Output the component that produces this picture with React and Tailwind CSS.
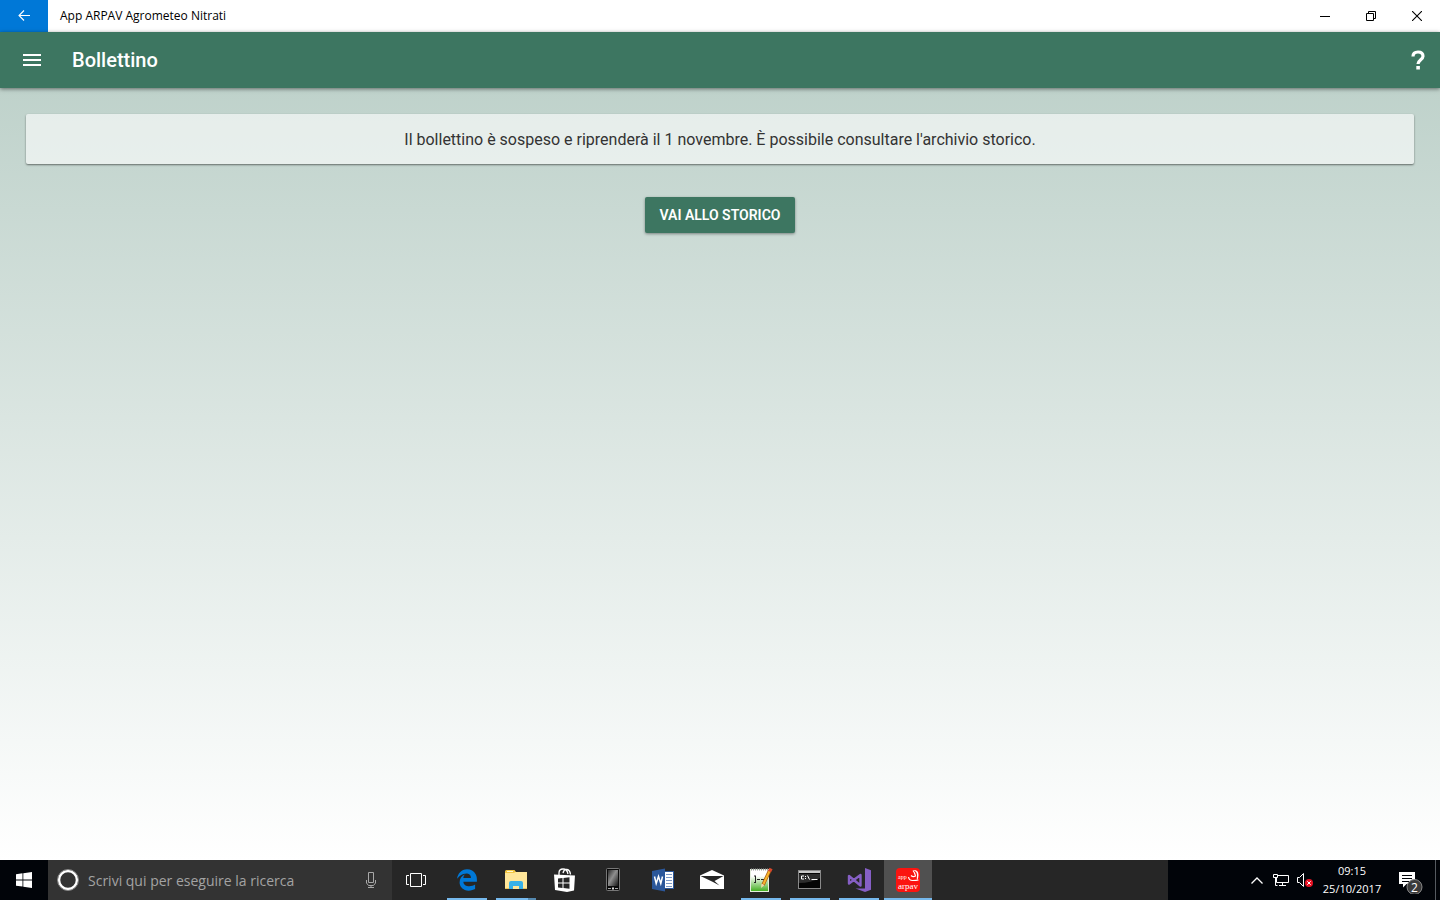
import { FaEdgeLegacy } from 'react-icons/fa6'

const ExplorerIcon = () => (
  <svg width="48" height="40" viewBox="0 0 48 40" aria-hidden="true">
    <path d="M13 11.5q0-1.500 1.500-1.500h8l1.500 2h10.500v17h-21.500z" fill="#f2c744" />
    <path d="M13 13h9l1.500-1h11.500v17h-22z" fill="#ffe699" />
    <path d="M15 11h6v1h-6z" fill="#fff7d6" />
    <path d="M17 29v-6q0-2 2-2h10q2 0 2 2v6h-4v-3h-6v3z" fill="#38b1e8" />
    <path d="M13 28h4v1h-4zM31 28h4v1h-4z" fill="#e9c35c" />
  </svg>
)

const StoreIcon = () => (
  <svg width="48" height="40" viewBox="0 0 48 40" aria-hidden="true">
    <path d="M18 15v-2q0-4 4-4t5 5M22 13q1-4 4-3.500t3.500 5" fill="none" stroke="#fff" strokeWidth="1.3" />
    <path d="M13 14.500l21 1-1 15-7 1.500-12-2z" fill="#fff" />
    <path d="M17 18.500l4.500-.5v4.500H17zM22.500 18l6-.7v5.200h-6zM17 23.500h4.500V28l-4.500-.5zM22.500 23.500h6v5.200l-6-.7z" fill="#262626" />
  </svg>
)

const PhoneIcon = () => (
  <svg width="48" height="40" viewBox="0 0 48 40" aria-hidden="true">
    <defs>
      <linearGradient id="phone" x1="0" y1="0" x2="1" y2="1">
        <stop offset="0" stopColor="#2a2a2a" />
        <stop offset=".45" stopColor="#8f8f8f" />
        <stop offset="1" stopColor="#161616" />
      </linearGradient>
    </defs>
    <rect x="16.5" y="8.5" width="13" height="22" rx="1" fill="#0a0a0a" stroke="#777" />
    <rect x="18" y="10" width="10" height="16" fill="url(#phone)" />
    <path d="M18 28.500h3M25 28.500h3" stroke="#aaa" />
    <rect x="22" y="27.5" width="2" height="2" fill="#ddd" />
  </svg>
)

const WordIcon = () => (
  <svg width="48" height="40" viewBox="0 0 48 40" aria-hidden="true">
    <rect x="25.5" y="11.5" width="9" height="17" fill="#fff" stroke="#2b579a" />
    <path d="M27 14.500h6M27 17.500h6M27 20.500h6M27 23.500h6M27 26.500h6" stroke="#7a98c6" />
    <path d="M13 11l13-2.500v23L13 29z" fill="#2b579a" />
    <path d="M15.500 16.500l1.700 7 2.300-7 2.300 7 1.700-7" fill="none" stroke="#fff" strokeWidth="1.5" />
  </svg>
)

const MailIcon = () => (
  <svg width="48" height="40" viewBox="0 0 48 40" aria-hidden="true">
    <path d="M12 15.500L24 10l12 5.500V29H12z" fill="#fff" />
    <path d="M12.500 16H35.500L26.500 21l5 4.500-6.500-3.500z" fill="#262626" />
  </svg>
)

const EditorIcon = () => (
  <svg width="48" height="40" viewBox="0 0 48 40" aria-hidden="true">
    <defs>
      <linearGradient id="editor" x1="0" y1="0" x2="0" y2="1">
        <stop offset=".3" stopColor="#fff" />
        <stop offset="1" stopColor="#3fae1c" />
      </linearGradient>
    </defs>
    <rect x="13.5" y="9.5" width="18" height="22" fill="url(#editor)" stroke="#e4eedd" />
    <path d="M14 9.500h17" stroke="#999" strokeDasharray="1 1" strokeWidth="2" />
    <path d="M17 16h2M17 22.500h2M18.500 16v7M20 19.500h3M24 19.500h3" stroke="#222" />
    <path d="M32.500 11l-6.500 14" stroke="#a85b12" strokeWidth="3.5" />
    <path d="M32.500 11l-6 13" stroke="#f8b62d" strokeWidth="2" />
    <path d="M34 8.500l-1.500 3" stroke="#d9482b" strokeWidth="3.5" />
    <path d="M24.500 23.500l3 1.500-3.500 3z" fill="#f5d9a8" />
  </svg>
)

const ConsoleIcon = () => (
  <svg width="48" height="40" viewBox="0 0 48 40" aria-hidden="true">
    <rect x="12.5" y="10.5" width="22" height="18" fill="#050505" stroke="#8a8a8a" />
    <path d="M13 11h21v2H13z" fill="#c8c8c8" />
    <path d="M13 14h21v4q-9 5-21 5z" fill="#2d2d2d" />
    <path d="M18 16h-2.500v3H18M19.500 16v1M19.500 18v1M21.500 15.500l2 4M25.500 19.500h6" fill="none" stroke="#fff" />
  </svg>
)

const VisualStudioIcon = () => (
  <svg width="48" height="40" viewBox="0 0 48 40" aria-hidden="true">
    <path d="M30 8l6 2.200v19.600L30 32l-9.500-3.500L30 28.500z" fill="#865fc5" />
    <path d="M14 16v7.500l11.500-8.500v10.500z" fill="none" stroke="#865fc5" strokeWidth="2.4" strokeLinejoin="round" />
  </svg>
)

const ArpavIcon = () => (
  <svg width="48" height="40" viewBox="0 0 48 40" aria-hidden="true">
    <rect x="12" y="8" width="24" height="24" rx="4" fill="#fb1410" />
    <path d="M29 10q5.500-.5 5.500 5 0 3-1.500 5.500-.5-2 0-4.500.5-4.500-4-6z" fill="#fff" />
    <path d="M29 10.500q2 2.500 2.500 5.500-2.500 1.500-4.500-.5M24.500 17q.5 3.500 4 3.500 4 0 6-.5" fill="none" stroke="#fff" strokeWidth="1.2" />
    <text x="14" y="19" fill="#fff" fontSize="6" fontFamily="Liberation Serif, serif">app</text>
    <text x="14" y="29" fill="#fff" fontSize="9" fontFamily="Liberation Serif, serif">arpav</text>
  </svg>
)

const taskApps = [
  { name: 'Microsoft Edge', icon: <FaEdgeLegacy size={22} color="#0078d7" aria-hidden="true" />, running: true },
  { name: 'Esplora file', icon: <ExplorerIcon />, running: true, multiple: true },
  { name: 'Store', icon: <StoreIcon /> },
  { name: 'Telefono', icon: <PhoneIcon /> },
  { name: 'Word', icon: <WordIcon /> },
  { name: 'Posta', icon: <MailIcon /> },
  { name: 'Editor', icon: <EditorIcon />, running: true },
  { name: 'Prompt dei comandi', icon: <ConsoleIcon />, running: true },
  { name: 'Visual Studio', icon: <VisualStudioIcon />, running: true },
  { name: 'App ARPAV', icon: <ArpavIcon />, running: true, active: true },
]

function TitleBar() {
  return (
    <div className="flex h-8 bg-white text-black">
      <button aria-label="Indietro" className="flex w-12 items-center justify-center bg-[#0078d7]">
        <svg width="12" height="12" viewBox="0 0 12 12" fill="none" stroke="#fff" aria-hidden="true">
          <path d="M12 5.500H.7M6 .5l-5 5 5 5" strokeWidth="1.1" />
        </svg>
      </button>
      <p className="flex-1 pl-3 font-['Open_Sans','Noto_Sans',sans-serif] text-xs leading-8">App ARPAV Agrometeo Nitrati</p>
      <button aria-label="Riduci a icona" className="flex w-[46px] items-center justify-center">
        <svg width="10" height="10" viewBox="0 0 10 10" stroke="#000" aria-hidden="true">
          <path d="M0 5.500h10" />
        </svg>
      </button>
      <button aria-label="Ripristina" className="flex w-[46px] items-center justify-center">
        <svg width="10" height="10" viewBox="0 0 10 10" fill="none" stroke="#000" aria-hidden="true">
          <path d="M.5 2.500h7v7h-7zM2.500 2.500v-2h7v7h-2" />
        </svg>
      </button>
      <button aria-label="Chiudi" className="flex w-[46px] items-center justify-center">
        <svg width="10" height="10" viewBox="0 0 10 10" stroke="#000" aria-hidden="true">
          <path d="M0 0l10 10M10 0L0 10" strokeWidth="1.1" />
        </svg>
      </button>
    </div>
  )
}

function Header() {
  return (
    <header className="flex h-14 items-center bg-[#3d7661] text-white shadow-[0_1px_4px_rgba(0,0,0,0.5)]">
      <button aria-label="Menu" className="flex h-14 w-16 items-center justify-center">
        <svg width="18" height="12" viewBox="0 0 18 12" fill="#fff" aria-hidden="true">
          <path d="M0 0h18v2H0zM0 5h18v2H0zM0 10h18v2H0z" />
        </svg>
      </button>
      <h1 className="flex-1 pl-2 text-xl font-medium">Bollettino</h1>
      <button aria-label="Aiuto" className="flex h-14 w-11 items-center justify-center">
        <svg width="14" height="20" viewBox="0 0 14 20" aria-hidden="true">
          <path d="M2 6.500C2 3.500 4 2 7 2s5 1.500 5 4.300C12 9.500 7 10 7 14" fill="none" stroke="#fff" strokeWidth="3.2" />
          <path d="M5.300 16h3.600v3.500h-3.600z" fill="#fff" />
        </svg>
      </button>
    </header>
  )
}

function Tray() {
  return (
    <div className="flex w-[272px] items-center justify-end bg-[#010409] text-white">
      <button aria-label="Mostra icone nascoste" className="flex h-10 w-6 items-center justify-center">
        <svg width="12" height="7" viewBox="0 0 12 7" fill="none" stroke="#fff" aria-hidden="true">
          <path d="M.5 6.500L6 1l5.500 5.500" strokeWidth="1.3" />
        </svg>
      </button>
      <button aria-label="Rete" className="flex h-10 w-6 items-center justify-center">
        <svg width="16" height="14" viewBox="0 0 16 14" fill="none" stroke="#fff" aria-hidden="true">
          <path d="M5 2.500h10.500v7h-12V5M9.500 9.500v3M6 12.500h7M.5 1.500h4v3h-4zM2.500 4.500v8h2" />
        </svg>
      </button>
      <button aria-label="Volume" className="flex h-10 w-6 items-center justify-center">
        <svg width="16" height="16" viewBox="0 0 16 16" fill="none" stroke="#fff" aria-hidden="true">
          <path d="M.5 5.500h2l4-4v13l-4-4h-2z" />
          <circle cx="12" cy="11" r="4" fill="#e81123" stroke="none" />
          <path d="M10.300 9.300l3.400 3.400M13.700 9.300l-3.400 3.400" />
        </svg>
      </button>
      <button className="w-[70px] font-['Open_Sans','Noto_Sans',sans-serif] text-[11px] leading-[18px]">
        <span className="block">09:15</span>
        <span className="block">25/10/2017</span>
      </button>
      <button aria-label="Centro notifiche, 2 nuove notifiche" className="flex h-10 w-12 items-center justify-center">
        <svg width="30" height="28" viewBox="0 0 30 28" aria-hidden="true">
          <path d="M3 6h16v12h-8.500L7 21.500V18H3z" fill="#fff" />
          <path d="M6 9.500h10M6 12.500h10M6 15.500h7" stroke="#010409" />
          <circle cx="18.500" cy="21" r="7.5" fill="#3b3b3b" stroke="#8a8a8a" />
          <text x="18.5" y="25.500" fill="#fff" fontSize="12" textAnchor="middle" fontFamily="Open Sans, sans-serif">2</text>
        </svg>
      </button>
      <button aria-label="Mostra desktop" className="h-10 w-[5px] border-l border-[#555a60]"></button>
    </div>
  )
}

function Taskbar() {
  return (
    <footer className="flex h-10 bg-[#262626]">
      <button aria-label="Start" className="flex w-12 items-center justify-center bg-[#010409]">
        <svg width="16" height="16" viewBox="0 0 16 16" fill="#fff" aria-hidden="true">
          <path d="M0 2.200l6.500-.9v6.200H0zM7.300 1.200L16 0v7.500H7.300zM0 8.400h6.500v6.200L0 13.700zM7.300 8.400H16V16l-8.700-1.200z" />
        </svg>
      </button>
      <label className="flex w-[344px] items-center bg-[#333333] pr-3 pl-2">
        <svg width="24" height="24" viewBox="0 0 24 24" fill="none" aria-hidden="true">
          <circle cx="12" cy="12" r="9" stroke="#fff" strokeWidth="2.5" />
          <circle cx="12" cy="12" r="10.5" stroke="#8b8b8b" />
        </svg>
        <input
          type="text"
          aria-label="Cerca"
          placeholder="Scrivi qui per eseguire la ricerca"
          className="ml-2 min-w-0 flex-1 bg-transparent pt-0.5 font-['Open_Sans','Noto_Sans',sans-serif] text-sm text-white outline-none placeholder:text-[#a3a3a3]"
        />
        <svg width="18" height="18" viewBox="0 0 18 18" fill="none" stroke="#a8a8a8" aria-hidden="true">
          <path d="M6.500 1.500h5v10h-5zM4.500 9v3l2 2.500h5l2-2.500V9M9 14.500V17M6 16.500h6" />
        </svg>
      </label>
      <button aria-label="Visualizzazione attività" className="mr-[3px] flex w-12 items-center justify-center">
        <svg width="20" height="14" viewBox="0 0 20 14" fill="none" stroke="#fff" aria-hidden="true">
          <path d="M4.500.5h11v13h-11zM3 2.500H.5v9H3M17 2.500h2.500v9H17" />
        </svg>
      </button>
      <div className="flex flex-1 gap-px">
        {taskApps.map(app => (
          <button
            key={app.name}
            aria-label={app.name}
            className={`relative flex h-10 w-12 items-center justify-center ${app.active ? 'bg-[#505050]' : ''}`}
          >
            {app.icon}
            {app.running && (
              <span className={`absolute bottom-0 flex h-0.5 bg-[#76b9ed] ${app.active ? 'inset-x-0' : 'inset-x-1'}`}>
                {app.multiple && <span className="ml-auto w-2 bg-[#5589b0]"></span>}
              </span>
            )}
          </button>
        ))}
      </div>
      <Tray />
    </footer>
  )
}

export default function App() {
  return (
    <div className="flex min-h-screen flex-col font-[Roboto,sans-serif]">
      <TitleBar />
      <Header />
      <main className="-z-10 flex flex-1 flex-col items-center bg-linear-to-b from-[#bfd2cb] from-0% to-white to-100% px-[26px] pt-[26px]">
        <p className="w-full rounded-xs bg-white/60 px-4 pt-[14px] pb-3 text-center text-base text-[#333333] shadow-[0_1px_2px_rgba(0,0,0,0.5)]">
          Il bollettino è sospeso e riprenderà il 1 novembre. È possibile consultare l'archivio storico.
        </p>
        <button className="mt-[33px] h-9 rounded-xs bg-[#3d7661] px-[15px] text-sm font-semibold text-white uppercase shadow-[0_1px_3px_rgba(0,0,0,0.4)]">
          Vai allo storico
        </button>
      </main>
      <Taskbar />
    </div>
  )
}
